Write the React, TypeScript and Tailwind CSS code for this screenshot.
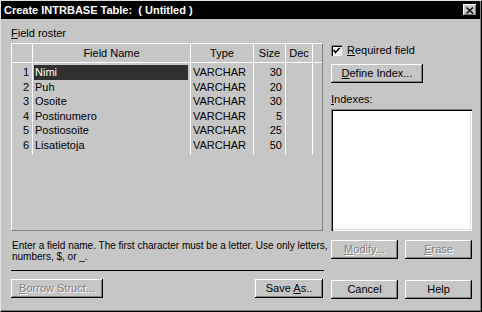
import React from "react";

const raised =
  "shadow-[inset_-1px_-1px_0_#000,inset_1px_1px_0_#fff,inset_-2px_-2px_0_#808080]";

function Btn({
  children,
  w,
  disabled,
}: {
  children: React.ReactNode;
  w: string;
  disabled?: boolean;
}) {
  return (
    <div
      className={`${w} h-[19px] bg-[#c6c6c6] ${raised} flex items-center justify-center text-[11px] leading-none ${
        disabled ? "text-[#808080] [text-shadow:1px_1px_0_#fff]" : "text-black"
      }`}
    >
      {children}
    </div>
  );
}

const rows = [
  { n: 1, name: "Nimi", type: "VARCHAR", size: "30" },
  { n: 2, name: "Puh", type: "VARCHAR", size: "20" },
  { n: 3, name: "Osoite", type: "VARCHAR", size: "30" },
  { n: 4, name: "Postinumero", type: "VARCHAR", size: "5" },
  { n: 5, name: "Postiosoite", type: "VARCHAR", size: "25" },
  { n: 6, name: "Lisatietoja", type: "VARCHAR", size: "50" },
];

export default function App() {
  return (
    <div
      className="w-[482px] h-[312px] bg-[#c6c6c6] border-l border-t border-l-[#e0e0e0] border-t-[#e0e0e0] border-r border-b border-r-black border-b-black text-black"
      style={{ fontFamily: '"Liberation Sans", Arial, sans-serif' }}
    >
      <div className="h-[310px] border-r border-b border-r-[#808080] border-b-[#808080] flex flex-col">
        {/* title bar */}
        <div className="h-[18px] bg-black flex items-center justify-between pl-[3px] pr-[3px]">
          <span className="text-white font-bold text-[11px] leading-none whitespace-pre">
            Create INTRBASE Table:  ( Untitled )
          </span>
          <div className={`w-[14px] h-[12px] bg-[#c6c6c6] ${raised} flex items-center justify-center`}>
            <svg width="8" height="7" viewBox="0 0 8 7">
              <path d="M0.5 0.5 L7 6.5 M7 0.5 L0.5 6.5" stroke="#000" strokeWidth="1.4" />
            </svg>
          </div>
        </div>

        {/* body */}
        <div className="flex pl-[10px] gap-[8px]">
          {/* left column */}
          <div className="w-[312px] flex flex-col">
            <div className="mt-[8px] h-[12px] text-[11px] leading-[12px]">
              <span className="underline">F</span>ield roster
            </div>
            {/* grid */}
            <div className="mt-[4px] h-[188px] border-t border-l border-t-white border-l-white border-r border-b border-r-[#808080] border-b-[#808080] flex flex-col text-[11px]">
              {/* header */}
              <div className="h-[19px] flex border-b border-b-white">
                <div className="w-[21px] border-r border-r-white" />
                <div className="w-[158px] border-r border-r-white flex items-center justify-center">Field Name</div>
                <div className="w-[63px] border-r border-r-white flex items-center justify-center">Type</div>
                <div className="w-[32px] border-r border-r-white flex items-center justify-center">Size</div>
                <div className="w-[27px] border-r border-r-white flex items-center justify-center">Dec</div>
              </div>
              {/* body columns */}
              <div className="flex">
                <div className="w-[21px] border-r border-r-white flex flex-col pt-[2px] pb-[3px]">
                  {rows.map((r) => (
                    <div key={r.n} className="h-[14.5px] flex items-center justify-end pr-[3px]">
                      {r.n}
                    </div>
                  ))}
                </div>
                <div className="w-[158px] border-r border-r-white flex flex-col pt-[2px] pb-[3px]">
                  {rows.map((r, i) => (
                    <div
                      key={r.n}
                      className={`h-[14.5px] flex items-center ml-[1px] mr-[2px] pl-[1px] ${
                        i === 0 ? "bg-[#303030] text-white" : ""
                      }`}
                    >
                      {r.name}
                    </div>
                  ))}
                </div>
                <div className="w-[63px] border-r border-r-white flex flex-col pt-[2px] pb-[3px]">
                  {rows.map((r) => (
                    <div key={r.n} className="h-[14.5px] flex items-center pl-[2px]">
                      {r.type}
                    </div>
                  ))}
                </div>
                <div className="w-[32px] border-r border-r-white flex flex-col pt-[2px] pb-[3px]">
                  {rows.map((r) => (
                    <div key={r.n} className="h-[14.5px] flex items-center justify-end pr-[3px]">
                      {r.size}
                    </div>
                  ))}
                </div>
                <div className="w-[27px] border-r border-r-white" />
              </div>
            </div>
            {/* hint */}
            <div className="mt-[9px] h-[22px] text-[10px] leading-[11px] pl-[1px] whitespace-nowrap">
              Enter a field name. The first character must be a letter. Use only letters,
              <br />
              numbers, $, or _.
            </div>
            <div className="mt-[8px] h-[1px] w-[313px] bg-black" />
            <div className="mt-[8px] flex">
              <Btn w="w-[92px]" disabled>
                <span>
                  <span className="underline">B</span>orrow Struct...
                </span>
              </Btn>
              <div className="flex-1" />
              <Btn w="w-[68px]">
                <span>
                  Save <span className="underline">A</span>s..
                </span>
              </Btn>
            </div>
          </div>

          {/* right column */}
          <div className="w-[141px] flex flex-col text-[11px]">
            <div className="mt-[26px] h-[11px] flex items-center">
              <div className="w-[11px] h-[11px] bg-white shadow-[inset_1px_1px_0_#808080,inset_2px_2px_0_#000,inset_-1px_-1px_0_#fff,inset_-2px_-2px_0_#dfdfdf] flex items-center justify-center">
                <svg width="7" height="7" viewBox="0 0 7 7">
                  <path d="M0.5 3 L2.5 5.5 L6.5 1" stroke="#000" strokeWidth="1.6" fill="none" />
                </svg>
              </div>
              <span className="ml-[5px] leading-none">
                <span className="underline">R</span>equired field
              </span>
            </div>
            <div className="mt-[8px]">
              <Btn w="w-[92px]">
                <span>
                  <span className="underline">D</span>efine Index...
                </span>
              </Btn>
            </div>
            <div className="mt-[10px] h-[12px] leading-[12px]">
              <span className="underline">I</span>ndexes:
            </div>
            <div className="mt-[4px] h-[122px] bg-white shadow-[inset_1px_1px_0_#808080,inset_2px_2px_0_#000,inset_-1px_-1px_0_#fff,inset_-2px_-2px_0_#dfdfdf]" />
            <div className="mt-[9px] flex gap-[7px]">
              <Btn w="w-[67px]" disabled>
                <span>
                  <span className="underline">M</span>odify...
                </span>
              </Btn>
              <Btn w="w-[67px]" disabled>
                <span>
                  <span className="underline">E</span>rase
                </span>
              </Btn>
            </div>
            <div className="mt-[21px] flex gap-[7px]">
              <Btn w="w-[67px]">Cancel</Btn>
              <Btn w="w-[67px]">Help</Btn>
            </div>
          </div>
        </div>
      </div>
    </div>
  );
}
